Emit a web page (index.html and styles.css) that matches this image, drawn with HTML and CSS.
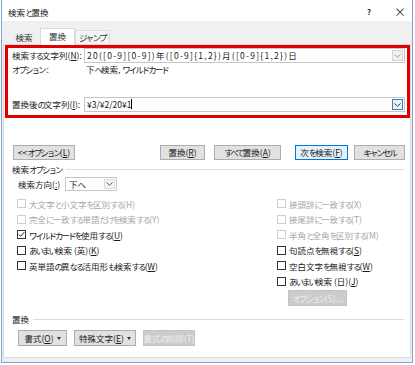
FILE: index.html
```html
<!DOCTYPE html>
<html lang="ja">
<head>
    <meta charset="UTF-8">
    <title>検索と置換</title>
    <link rel="stylesheet" href="styles.css">
</head>
<body>

    <div class="dialog">
        <div class="titlebar">
            <span class="title">検索<span class="k">と</span>置換</span>
            <span class="help">?</span>
            <span class="close">×</span>
        </div>

        <div class="tabs">
            <span class="tab tab-find">検索</span>
            <span class="tab active">置換</span>
            <span class="tab tab-jump"><span class="k">ジャンプ</span></span>
        </div>

        <div class="page">
            <div class="highlight">
                <div class="field-row">
                    <span class="field-label">検索<span class="k">する</span>文字列(<u>N</u>):</span>
                    <div class="combo">
                        <span class="combo-value pattern">20([0-9][0-9])年([0-9]{1,2})月([0-9]{1,2})日</span>
                        <span class="drop">
                            <svg width="7" height="4" viewBox="0 0 7 4"><polyline points="0.5,0.5 3.5,3.2 6.5,0.5" fill="none" stroke="#9a9a9a" stroke-width="1"/></svg>
                        </span>
                    </div>
                </div>
                <div class="info-row">
                    <span class="info-label"><span class="k">オプション</span> :</span>
                    <span>下<span class="k">へ</span>検索, <span class="k">ワイルドカード</span></span>
                </div>
                <div class="field-row replace-row">
                    <span class="field-label">置換後<span class="k">の</span>文字列(<u>I</u>):</span>
                    <div class="combo">
                        <span class="combo-value">¥3/¥2/20¥1<span class="caret"></span></span>
                        <span class="drop focused">
                            <svg width="7" height="4" viewBox="0 0 7 4"><polyline points="0.5,0.5 3.5,3.2 6.5,0.5" fill="none" stroke="#3a3a3a" stroke-width="1"/></svg>
                        </span>
                    </div>
                </div>
            </div>

            <div class="button-row">
                <button class="btn btn-options">&lt;&lt; <span class="k">オプション</span>(<u>L</u>)</button>
                <span class="spacer"></span>
                <button class="btn btn-replace">置換(<u>R</u>)</button>
                <button class="btn btn-replace-all"><span class="k">すべて</span>置換(<u>A</u>)</button>
                <button class="btn btn-next default">次<span class="k">を</span>検索(<u>F</u>)</button>
                <button class="btn btn-cancel"><span class="k">キャンセル</span></button>
            </div>

            <div class="section">
                <span>検索<span class="k">オプション</span></span>
                <span class="rule"></span>
            </div>

            <div class="direction-row">
                <span class="direction-label">検索方向(<u>:</u>)</span>
                <div class="select">
                    <span class="select-value">下<span class="k">へ</span></span>
                    <span class="drop">
                        <svg width="7" height="4" viewBox="0 0 7 4"><polyline points="0.5,0.5 3.5,3.2 6.5,0.5" fill="none" stroke="#5a5a5a" stroke-width="1"/></svg>
                    </span>
                </div>
            </div>

            <div class="options">
                <div class="col col-left">
                    <div class="check disabled"><span class="box"></span>大文字<span class="k">と</span>小文字<span class="k">を</span>区別<span class="k">する</span>(H)</div>
                    <div class="check disabled"><span class="box"></span>完全<span class="k">に</span>一致<span class="k">する</span>単語<span class="k">だけを</span>検索<span class="k">する</span>(Y)</div>
                    <div class="check">
                        <span class="box">
                            <svg width="7" height="7" viewBox="0 0 7 7"><polyline points="0.8,3.4 2.7,5.3 6.2,1.2" fill="none" stroke="#222" stroke-width="1"/></svg>
                        </span><span class="k">ワイルドカードを</span>使用<span class="k">する</span>(<u>U</u>)
                    </div>
                    <div class="check"><span class="box"></span><span class="k">あいまい</span>検索 (英)(<u>K</u>)</div>
                    <div class="check"><span class="box"></span>英単語<span class="k">の</span>異<span class="k">なる</span>活用形<span class="k">も</span>検索<span class="k">する</span>(<u>W</u>)</div>
                </div>
                <div class="col col-right">
                    <div class="check disabled"><span class="box"></span>接頭辞<span class="k">に</span>一致<span class="k">する</span>(X)</div>
                    <div class="check disabled"><span class="box"></span>接尾辞<span class="k">に</span>一致<span class="k">する</span>(T)</div>
                    <div class="check disabled"><span class="box"></span>半角<span class="k">と</span>全角<span class="k">を</span>区別<span class="k">する</span>(M)</div>
                    <div class="check"><span class="box"></span>句読点<span class="k">を</span>無視<span class="k">する</span>(<u>S</u>)</div>
                    <div class="check"><span class="box"></span>空白文字<span class="k">を</span>無視<span class="k">する</span>(<u>W</u>)</div>
                    <div class="check"><span class="box"></span><span class="k">あいまい</span>検索 (日)(<u>J</u>)</div>
                    <button class="btn off btn-more"><span class="k">オプション</span>(S)...</button>
                </div>
            </div>

            <div class="section section-replace">
                <span>置換</span>
                <span class="rule"></span>
            </div>

            <div class="bottom-row">
                <button class="btn btn-format">書式(<u>O</u>)<span class="tri"></span></button>
                <button class="btn btn-special">特殊文字(<u>E</u>)<span class="tri"></span></button>
                <button class="btn off btn-clear">書式<span class="k">の</span>削除(T)</button>
            </div>
        </div>
    </div>

</body>
</html>
```

FILE: styles.css
```css
body {
    margin: 0;
    background: #fff;
    font-family: "Noto Sans CJK JP", "Noto Sans", sans-serif;
    font-size: 8.5px;
    line-height: 1.2;
    white-space: nowrap;
    color: #1a1a1a;
}
u {
    text-decoration: underline;
    text-underline-offset: 1px;
}
/* kana runs: narrower, like the UI font */
.k {
    letter-spacing: -2px;
}
.dialog {
    margin-left: 1px;
    width: 412px;
    height: 363px;
    box-sizing: border-box;
    border: 1px solid #7ba6d3;
    border-top: none;
    background: #f0f0f0;
}
.titlebar {
    height: 21px;
    box-sizing: border-box;
    padding-top: 3px;
    display: flex;
    align-items: center;
    background: #fff;
    padding-left: 6px;
}
.title {
    flex: 1;
}
.help, .close {
    width: 12px;
    text-align: center;
    color: #333;
}
.help {
    font-size: 8px;
    font-weight: bold;
    margin-right: 19px;
}
.close {
    font-size: 12px;
    margin-right: 6px;
}
.tabs {
    height: 23px;
    display: flex;
    align-items: flex-end;
    padding-left: 6px;
}
.tab {
    height: 14px;
    box-sizing: border-box;
    display: flex;
    align-items: center;
    justify-content: center;
    color: #333;
}
.tab-find {
    width: 32px;
}
.tab-jump {
    width: 35px;
    border: 1px solid #dcdcdc;
    border-bottom: none;
    background: #f4f4f4;
}
.tab-jump .k {
    letter-spacing: -1.6px;
}
.tab.active {
    width: 35px;
    height: 17px;
    margin-bottom: -1px;
    background: #fff;
    border: 1px solid #dadada;
    border-bottom: none;
    padding-bottom: 2px;
}
.page {
    height: 314px;
    box-sizing: border-box;
    margin: 0 1px;
    background: #fff;
    border: 1px solid #dadada;
    display: flex;
    flex-direction: column;
}
.highlight {
    height: 73px;
    box-sizing: border-box;
    margin-left: 1px;
    border: 3px solid #e00000;
    padding: 0 2px 3px 4px;
    display: flex;
    flex-direction: column;
}
.field-row {
    height: 15px;
    display: flex;
    align-items: center;
}
.replace-row {
    margin-top: auto;
}
.field-label {
    width: 72px;
    flex-shrink: 0;
}
.combo {
    flex: 1;
    height: 15px;
    box-sizing: border-box;
    border: 1px solid #c6c6c6;
    display: flex;
    align-items: center;
    padding-left: 2px;
}
.combo-value {
    flex: 1;
}
.pattern {
    letter-spacing: 1.25px;
}
.caret {
    display: inline-block;
    width: 1px;
    height: 10px;
    background: #000;
    vertical-align: -1px;
}
.drop {
    width: 11px;
    height: 11px;
    box-sizing: border-box;
    margin-right: 1px;
    border: 1px solid #d4d4d4;
    background: #f2f2f2;
    display: flex;
    align-items: center;
    justify-content: center;
}
.drop.focused {
    border-color: #3c7fb1;
    background: #e5f1fb;
}
.info-row {
    height: 12px;
    display: flex;
    align-items: center;
}
.info-label {
    width: 74px;
}
.button-row {
    margin-top: 27px;
    height: 15px;
    display: flex;
    padding: 0 5px 0 9px;
}
.btn {
    height: 100%;
    box-sizing: border-box;
    border: 1px solid #adadad;
    background: #e1e1e1;
    font: inherit;
    white-space: nowrap;
    color: #1a1a1a;
    padding: 0;
    display: flex;
    align-items: center;
    justify-content: center;
}
.btn.default {
    border-color: #0078d7;
    background: #e5f1fb;
}
.btn.off {
    border-color: #c4c4c4;
    background: #cccccc;
    color: #ececec;
}
.spacer {
    flex: 1;
}
.btn-options {
    width: 62px;
}
.btn-replace {
    width: 45px;
}
.btn-replace-all {
    width: 67px;
    margin-left: 9px;
}
.btn-next {
    width: 53px;
    margin-left: 14px;
}
.btn-cancel {
    width: 51px;
    margin-left: 6px;
}
.section {
    margin-top: 3px;
    height: 12px;
    display: flex;
    align-items: center;
    padding: 0 6px 0 8px;
}
.rule {
    flex: 1;
    height: 1px;
    background: #dcdcdc;
    margin-left: 4px;
}
.direction-row {
    margin-top: 2px;
    height: 14px;
    display: flex;
    align-items: center;
    padding-left: 14px;
}
.direction-label {
    width: 47px;
}
.select {
    width: 52px;
    height: 14px;
    box-sizing: border-box;
    border: 1px solid #c6c6c6;
    display: flex;
    align-items: center;
    padding-left: 3px;
}
.select-value {
    flex: 1;
}
.select .drop {
    height: 10px;
    border-color: #dcdcdc;
    background: #f5f5f5;
}
.options {
    margin-top: 5px;
    display: flex;
}
.col-left {
    width: 273px;
    box-sizing: border-box;
    padding-left: 13px;
}
.col-right {
    flex: 1;
}
.check {
    height: 15.5px;
    display: flex;
    align-items: center;
}
.box {
    width: 9px;
    height: 9px;
    box-sizing: border-box;
    border: 1px solid #333;
    background: #fff;
    margin-right: 3px;
    display: flex;
    align-items: center;
    justify-content: center;
    flex-shrink: 0;
}
.check.disabled {
    color: #a6a6a6;
}
.check.disabled .box {
    border-color: #cfcfcf;
}
.btn-more {
    margin-top: 1px;
    margin-left: 11px;
    width: 59px;
    height: 16px;
}
.section-replace {
    margin-top: 7px;
}
.bottom-row {
    margin-top: 5px;
    height: 16px;
    display: flex;
    padding-left: 14px;
}
.btn-format {
    width: 49px;
}
.btn-special {
    width: 62px;
    margin-left: 7px;
}
.btn-clear {
    width: 52px;
    margin-left: 7px;
}
.tri {
    width: 0;
    height: 0;
    margin-left: 3px;
    border-left: 2.5px solid transparent;
    border-right: 2.5px solid transparent;
    border-top: 3px solid #333;
}
```
